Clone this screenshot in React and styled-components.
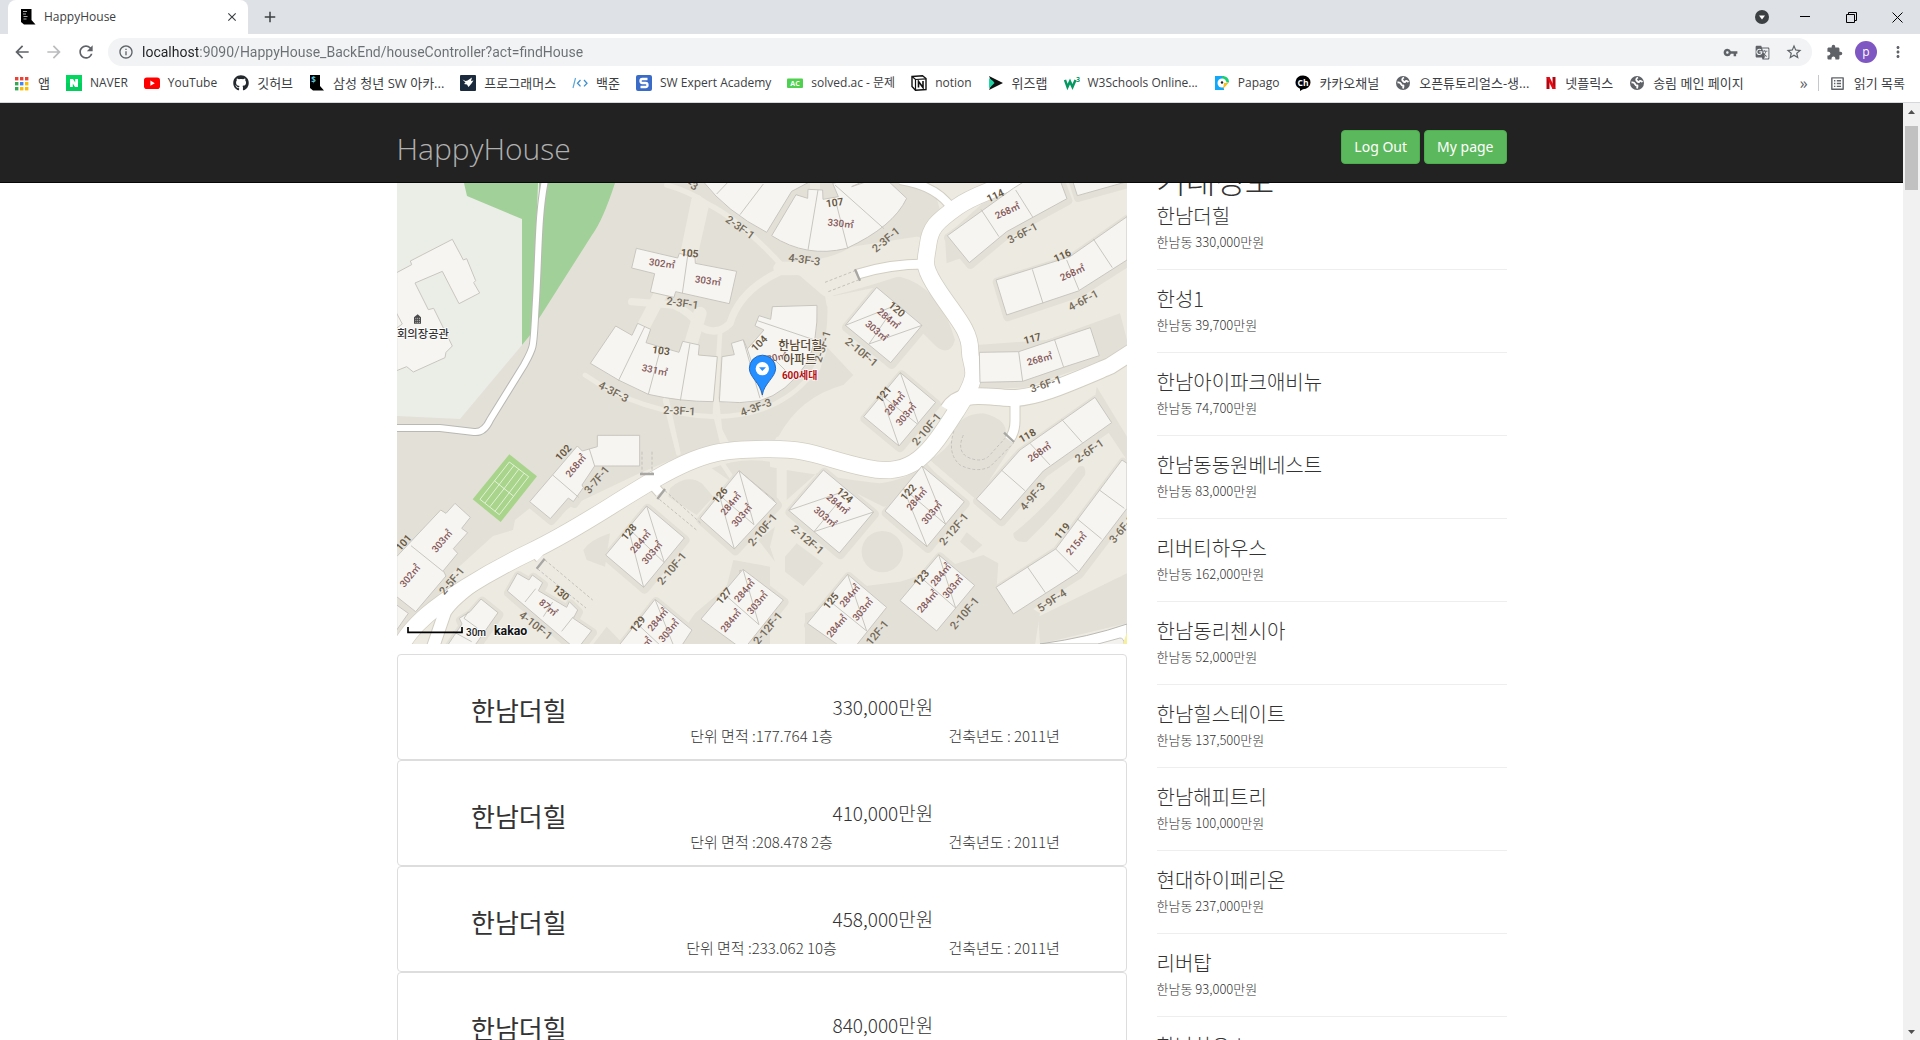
import React from "react";
import styled, { createGlobalStyle, css } from "styled-components";
import {
  MdArrowBack, MdArrowForward, MdRefresh, MdInfoOutline, MdVpnKey, MdGTranslate,
  MdStarOutline, MdExtension, MdMoreVert, MdClose, MdAdd, MdOutlineListAlt,
} from "react-icons/md";
import { FaGithub } from "react-icons/fa";

const latin = `"Open Sans", "Noto Sans CJK KR", sans-serif`;
const korean = `"Noto Sans CJK KR", "Open Sans", sans-serif`;

const GlobalStyle = createGlobalStyle`
  *, *::before, *::after { box-sizing: border-box; }
  body { margin: 0; background: #fff; color: #333; font-family: ${korean}; overflow: hidden; }
  h1, h2, h3, p, ul { margin: 0; padding: 0; font-weight: 400; }
  li { list-style: none; }
  button { font: inherit; padding: 0; border: 0; background: none; color: inherit; }
  a { color: inherit; text-decoration: none; }
  svg { display: block; flex: none; }
`;

const Window = styled.div`
  display: flex;
  flex-direction: column;
  height: 100vh;
`;

/* ---------- browser frame ---------- */

const TabStrip = styled.div`
  display: flex;
  align-items: center;
  height: 34px;
  padding-left: 8px;
  background: #dee1e6;
  color: #3c4043;
`;
const Tab = styled.div`
  display: flex;
  align-items: center;
  gap: 8px;
  width: 240px;
  height: 34px;
  padding: 0 8px 0 12px;
  background: #fff;
  border-radius: 8px 8px 0 0;
  font: 12px/16px ${latin};
`;
const TabTitle = styled.span`flex: 1;`;
const IconButton = styled.button`
  display: grid;
  place-items: center;
  width: ${(p) => p.$w || 32}px;
  height: 28px;
  color: ${(p) => p.$color || "#5f6368"};
`;
const WindowControls = styled.div`
  display: flex;
  align-items: center;
  margin-left: auto;
`;

const Toolbar = styled.div`
  display: flex;
  align-items: center;
  height: 36px;
  padding: 0 6px;
  background: #fff;
`;
const Omnibox = styled.label`
  display: flex;
  align-items: center;
  flex: 1;
  height: 28px;
  margin: 0 6px;
  padding: 0 2px 0 10px;
  gap: 8px;
  border-radius: 14px;
  background: #f1f3f4;
  color: #5f6368;
`;
const Address = styled.input`
  flex: 1;
  min-width: 0;
  padding: 0;
  border: 0;
  outline: 0;
  font: 14px/20px Roboto, ${latin};
  color: transparent;
  background: linear-gradient(90deg, #202124 56px, #6b6f73 56px);
  background-clip: text;
  -webkit-background-clip: text;
`;
const Avatar = styled.span`
  display: grid;
  place-items: center;
  width: 22px;
  height: 22px;
  border-radius: 50%;
  background: #7e57c2;
  color: #fff;
  font: 12px/16px ${latin};
`;

const Bookmarks = styled.nav`
  display: flex;
  align-items: center;
  height: 33px;
  padding: 0 15px 6px 14px;
  gap: 16px;
  border-bottom: 1px solid #d5d7da;
  background: #fff;
  white-space: nowrap;
`;
const Bookmark = styled.a`
  display: flex;
  align-items: center;
  gap: 8px;
  font: ${(p) => (p.$korean ? 13 : 12)}px/20px ${latin};
  color: #3c4043;
`;
const BookmarkEnd = styled.div`
  display: flex;
  align-items: center;
  gap: 10px;
  margin-left: auto;
  font: 16px/20px ${latin};
  color: #5f6368;
`;
const Divider = styled.span`
  width: 1px;
  height: 16px;
  background: #c6c9cc;
`;

/* ---------- page ---------- */

const Viewport = styled.div`
  display: flex;
  flex: 1;
  min-height: 0;
`;
const Page = styled.div`
  flex: 1;
  min-width: 0;
  overflow: hidden;
`;
const container = css`
  width: 100%;
  max-width: 1140px;
  margin: 0 auto;
  padding: 0 15px;
`;
const SiteHeader = styled.header`
  height: 80px;
  background: #222;
  border-bottom: 1px solid #080808;
`;
const HeaderInner = styled.div`
  ${container}
  display: flex;
  align-items: center;
  justify-content: space-between;
  height: 80px;
  padding-top: 8px;
`;
const Brand = styled.a`
  padding-top: 4px;
  font: 300 30px/40px ${latin};
  color: #b0b0b0;
`;
const Actions = styled.div`
  display: flex;
  gap: 4px;
`;
const GreenButton = styled.button`
  height: 34px;
  padding: 0 12px;
  border: 1px solid #4cae4c;
  border-radius: 4px;
  background: #5cb85c;
  color: #fff;
  font: 14px/20px "Noto Sans", ${latin};
`;

const Content = styled.main`
  ${container}
  display: grid;
  grid-template-columns: 73fr 35fr;
  column-gap: 30px;
`;
const MapFrame = styled.figure`
  margin: 0 0 10px;
  svg { width: 100%; height: auto; }
`;
const Card = styled.article`
  display: grid;
  grid-template-columns: repeat(3, 1fr);
  grid-template-rows: 26px 32px;
  align-items: center;
  height: 106px;
  padding-top: 39px;
  border: 1px solid #ddd;
  border-radius: 4px;
  text-align: center;
`;
const CardTitle = styled.h2`
  padding-top: 6px;
  font-size: 26px;
  line-height: 32px;
`;
const CardPrice = styled.p`
  grid-column: 2 / 4;
  font-size: 19px;
  line-height: 24px;
  font-weight: 300;
`;
const CardDetail = styled.p`
  grid-column: ${(p) => p.$col};
  font-size: 15px;
  line-height: 20px;
  font-weight: 300;
`;
const SideTitle = styled.h1`
  display: flex;
  align-items: flex-end;
  height: 16px;
  overflow: hidden;
  font-size: 32px;
  line-height: 40px;
  font-weight: 300;
`;
const Deal = styled.li`
  height: 83px;
  padding-top: 15px;
  border-bottom: 1px solid #eee;
  &:first-child { height: 71px; padding-top: 3px; }
`;
const DealName = styled.h3`
  font-size: 20px;
  line-height: 28px;
  font-weight: 300;
`;
const DealInfo = styled.p`
  font-size: 13px;
  line-height: 24px;
  font-weight: 300;
`;

const Scrollbar = styled.div`
  display: flex;
  flex-direction: column;
  align-items: center;
  width: 17px;
  background: #f1f1f1;
`;
const ScrollArrow = styled.button`
  display: grid;
  place-items: center;
  width: 17px;
  height: 17px;
`;
const Thumb = styled.div`
  width: 13px;
  height: 64px;
  margin: 6px 0 auto;
  background: #c1c1c1;
`;

/* ---------- bookmark icons ---------- */

const Ico = ({ children, w = 16 }) => (
  <svg width={w} height="16" viewBox="0 0 16 16" aria-hidden="true">{children}</svg>
);
const glyph = (size, fill = "#fff") => ({ fontSize: size, fontWeight: 700, fill, textAnchor: "middle", fontFamily: "Open Sans, sans-serif" });

const icons = {
  apps: (
    <Ico>{["#ea4335", "#ea4335", "#ea4335", "#34a853", "#4285f4", "#fbbc04", "#34a853", "#fbbc04", "#fbbc04"].map((c, i) => (
      <rect key={i} x={1 + (i % 3) * 5} y={2 + Math.floor(i / 3) * 5} width="3.4" height="3.4" fill={c} />
    ))}</Ico>
  ),
  naver: <Ico><rect width="16" height="16" fill="#03d75f" /><path d="M0 8h16v8H0z" fill="#04c35c" opacity=".5" /><path d="M4 4h3l2.200 3.600V4H12v8H9L6.800 8.400V12H4z" fill="#fff" /></Ico>,
  youtube: <Ico><rect y="2.500" width="16" height="11.500" rx="2.800" fill="#f00" /><path d="M6.400 5.600v5.200l4.400-2.600z" fill="#fff" /></Ico>,
  github: <FaGithub size={16} color="#24292e" />,
  ssafy: <Ico><path d="M1 0h10v11l4 4.500H4L1 13z" fill="#000" /><text x="4.500" y="8" {...glyph(8, "#56c5dd")}>$</text></Ico>,
  house: <Ico><path d="M1 0h10.500v11l4 4.500H4L1 13z" fill="#000" /><path d="M3 2.500h4M3 5h3M3.500 7.500h4M3.500 10h3" stroke="#aaa" strokeWidth="1" /></Ico>,
  programmers: <Ico><rect width="16" height="16" rx="1" fill="#1b2a3d" /><path d="M2.500 4.500l3 1.500 2-.5L12 2.500 11 6l2.500-.5-2 3L8.500 12 7 9.500 4 9l1.500-1.500z" fill="#fff" /></Ico>,
  baekjoon: <Ico><path d="M3.500 3L1 13" stroke="#5aa7d6" strokeWidth="1.200" /><path d="M8.500 5L5.500 8.200l3 3.200M12 5l3 3.200-3 3.200" fill="none" stroke="#3f8fd0" strokeWidth="1.300" /></Ico>,
  swea: <Ico><rect width="16" height="16" rx="2" fill="#3a6bc7" /><path d="M11.500 4H6.300Q4.500 4 4.500 5.900T6.300 8h3.400q1.800 0 1.800 2t-1.800 2H4.500" fill="none" stroke="#fff" strokeWidth="2.300" /></Ico>,
  solved: <Ico><rect y="3.500" width="16" height="9.500" rx="1" fill="#4fd04f" /><text x="8" y="11" {...glyph(7)}>AC</text></Ico>,
  notion: <Ico><path d="M1 1.500L11.500.8 15 3.500v11L4.500 15.300 1 11.500z" fill="#fff" stroke="#111" strokeWidth="1.400" /><path d="M1 1.500l3.500 3L15 3.800M4.500 4.500v10.800" fill="none" stroke="#111" strokeWidth="1.200" /><path d="M7.500 12.500V6.500l4.500 6V6" fill="none" stroke="#111" strokeWidth="1.600" /></Ico>,
  wizlab: <Ico><path d="M1 1l14 7L1 15l3-7z" fill="#111" /><path d="M1 3l4 3 1.500 2L1 13.500z" fill="#24d3a6" /></Ico>,
  w3: <Ico><path d="M1 5l2.500 7L6 6.500 8.500 12l3-7" fill="none" stroke="#059862" strokeWidth="2.400" /><text x="14" y="6.500" {...glyph(7, "#059862")}>3</text></Ico>,
  papago: <Ico><path d="M1 1h9v14H1z" fill="#12a8fa" /><path d="M8 1a6 6 0 0 1 7 6.500H8z" fill="#1fce74" /><circle cx="8" cy="8" r="4.500" fill="#fff" /><path d="M10 8h4.500L9 14z" fill="#f9bd16" /><circle cx="8" cy="7.500" r="1.200" fill="#222" /></Ico>,
  kakao: <Ico><path d="M8 .5a7.500 6.900 0 1 1 0 13.800L5 16v-2.300A7.500 6.900 0 0 1 8 .5z" fill="#000" /><text x="8" y="10.500" {...glyph(8.5)}>Ch</text></Ico>,
  globe: <Ico><circle cx="8" cy="8" r="7" fill="#5f6368" /><path d="M2.500 7.500Q5 7 6 9t2 1.500 0 3M9 2.500Q6 4 8 6t2.500.5 3 .5" fill="none" stroke="#fff" strokeWidth="1.800" /></Ico>,
  netflix: <Ico w={12}><path d="M2 0h4v16H2z" fill="#b1060f" /><path d="M10 0h4v16h-4z" fill="#b1060f" /><path d="M2 0h4l8 16h-4z" fill="#e50914" /></Ico>,
};

const bookmarks = [
  ["apps", "앱"], ["naver", "NAVER"], ["youtube", "YouTube"], ["github", "깃허브"],
  ["ssafy", "삼성 청년 SW 아카..."], ["programmers", "프로그래머스"], ["baekjoon", "백준"],
  ["swea", "SW Expert Academy"], ["solved", "solved.ac - 문제"], ["notion", "notion"],
  ["wizlab", "위즈랩"], ["w3", "W3Schools Online..."], ["papago", "Papago"],
  ["kakao", "카카오채널"], ["globe", "오픈튜토리얼스-생..."], ["netflix", "넷플릭스"],
  ["globe", "송림 메인 페이지"],
];
const startsKorean = (label) => /^[가-힣]/.test(label);

/* ---------- map ---------- */

/* Survey sheets: drawn at three times map scale, each with its own origin. */
const sheets = {
  a: [390, 100], b: [750, 180], c: [390, 400], d: [750, 400], e: [540, 180],
};
const at = (s) => `translate(${sheets[s][0]} ${sheets[s][1]}) scale(.33333)`;

/* [sheet, outline, inner walls] */
const buildings = [
  ["a", "M20 518L65 494 61 483 187 418 220 480 230 476 257 542 251 548 269 579 207 611 157 514 75 549 115 629 131 625 187 738 168 757 165 773 70 816 50 800 20 812z", ""],
  ["a", "M20 640L37 672 20 684z", ""],
  ["e", "M289 205L413 234 418 220 465 232 466 250 590 274 568 371 407 335 402 352 331 336 344 281 275 264z", "M443 228L427 340"],
  ["e", "M227 438L276 466 293 430 332 448 318 488 417 517 428 484 478 495 475 525 532 530 520 665Q420 665 325 643Q235 605 151 550z", "M314 440L235 603M362 505L325 643M450 490L421 662"],
  ["e", "M546 530L583 524 574 490 610 479 622 507 672 450 645 437 657 407 692 418 697 380 831 376Q835 480 800 550 740 640 660 662 600 672 538 665z", "M610 480L660 655M622 507L668 650M652 422L824 480M690 525L750 585"],
  ["e", "M490 5L810 5 755 34 680 157Q560 95 490 5zM590 -10", "M575 -5L530 42M670 12L600 104"],
  ["e", "M768 44L803 55 804 28 848 30 849 58 895 50 878 10 1020 -20 1100 55Q1060 140 920 205 800 235 695 167z", "M834 30L804 210M890 75L923 205M885 15L1032 146"],
  ["e", "M935 20L990 -5 1010 -5z", ""],
  ["b", "M592 167L790 25 830 0 930 0 951 56 770 155 658 248z", "M693 88L747 170M797 30L848 111"],
  ["b", "M967 0L982 47 1131 5 1131 0z", ""],
  ["b", "M738 300L960 230 1131 110 1131 240 985 333 770 405z", "M847 268L879 370M950 240L987 330M1030 177L1087 263"],
  ["b", "M688 517L806 515 1021 443 1048 527 940 562 818 604 690 607z", "M806 515L818 604M914 480L941 562"],
  ["b", "M380 322L516 436 422 548 286 436z", "M286 436L440 375M516 436L357 492 420 400"],
  ["b", "M451 578L557 667 447 798 341 710z", "M451 578L505 730M394 645L447 798M394 645L502 732"],
  ["d", "M679 297L810 150 1035 -8 1085 68 880 213 752 360z", "M754 210L825 272M840 130L900 195M935 58L997 128"],
  ["d", "M738 562L917 447 1116 180 1131 190 1131 325 985 517 790 642z", "M832 500L886 578M917 447L985 515M982 357L1055 417M1048 270L1123 325"],
  ["d", "M220 210L371 336 268 459 116 331z", "M116 331L280 275M371 336L192 395 262 310"],
  ["d", "M516 198L643 305 531 440 405 333z", "M516 198L587 373M460 265L531 440M460 265L587 373"],
  ["d", "M566 464L674 556 560 693 450 602z", "M566 464L617 624M510 530L617 624"],
  ["d", "M293 523L410 622 300 760 172 670z", "M293 523L350 693M235 600L350 693"],
  ["d", "M-30 215L73 300 12 375 -30 340z", ""],
  ["d", "M-30 510L92 604 10 700 -30 670z", "M-30 640L28 678M-10 560L28 678"],
  ["c", "M562 138L577 153 622 140 622 106 749 106 749 198 614 198 576 255 580 263 550 305 535 294 481 356 419 305z", "M598 147L614 198M488 225L566 292"],
  ["c", "M20 470L152 330 168 340 195 310 241 352 215 385 233 398 190 446 203 460 160 512 168 528 77 635 20 590z", "M63 437L160 515"],
  ["c", "M770 318L883 414 761 562 647 465z", "M770 318L823 488M715 385L761 562M715 385L823 488"],
  ["c", "M1047 212L1160 310 1033 447 930 355z", "M1047 212L1092 374M988 285L1033 447M988 285L1092 374"],
  ["c", "M1059 508L1180 600 1060 750 933 657z", "M1059 508L1107 674M1000 580L1107 674"],
  ["c", "M795 598L906 690 860 760 680 745z", "M795 598L850 735M738 668L815 740"],
  ["c", "M382 520L417 540 427 525 458 548 445 572 530 622 538 605 563 630 550 655 605 692 560 750 352 573z", "M437 566L405 606M488 606L460 650M550 650L515 694"],
  ["c", "M273 597L324 638 245 750 170 740 216 672 208 655 240 635z", "M235 635L222 655 262 684M190 695L245 725"],
  ["c", "M20 615L55 640 20 690z", ""],
];

/* soft ground patches between the blocks */
const grounds = [
  ["e", "M625 350Q650 285 760 280 850 300 862 360V470L830 380 690 375 655 405Q610 390 625 350z"],
  ["e", "M870 350Q1000 290 1080 290 1200 320 1245 480 1230 530 1190 500L1010 322z"],
  ["e", "M860 500L940 585 910 615Q780 650 715 770H540L528 712Q720 700 840 570z"],
  ["b", "M720 50L800 10V100L700 210 590 250 585 170z"],
  ["b", "M680 495L890 480 1110 400 1131 480 1131 510 940 580 690 625z"],
  ["c", "M965 205Q1050 170 1140 185V330L1030 250z"],
  ["c", "M840 265Q890 220 935 250L970 290 920 345 835 290zM580 450Q600 420 660 400L645 500 590 480z"],
  ["d", "M0 185L80 205V330L30 310zM110 210Q300 240 390 250 470 240 530 190L620 290 400 320 200 220 110 300z"],
  ["d", "M540 180Q590 150 605 120 620 40 700 40 780 60 765 110L790 130 680 300z"],
  ["d", "M25 420L75 380 60 440 75 485zM105 470L140 430 220 490 160 558 105 515z"],
  ["d", "M335 455a62 62 0 1 0 124 0a62 62 0 1 0 -124 0zM650 397L697 435 670 460 630 425z"],
  ["d", "M790 400Q880 330 985 200 1010 190 1005 225 930 330 830 425 790 430 790 400z"],
  ["d", "M165 640Q330 600 330 560L450 545 700 465 745 490 740 560 870 640 855 735H165z"],
  ["d", "M865 650L1131 520V670L870 732z"],
  ["d", "M1040 -40L1131 110V180L1030 30z"],
  ["c", "M850 735L915 640 1010 560 1030 480 1140 500V735zM610 732L650 680 700 732z"],
];

/* footpaths: [sheet, path, width] */
const paths = [
  ["e", "M380 15Q450 35 500 70 600 120 720 250", 16],
  ["e", "M470 60L435 230M490 80L455 235", 32],
  ["e", "M275 365L400 375Q450 395 480 440 530 470 570 430 600 330 720 275 860 260 870 370", 22],
  ["e", "M360 345L310 440M480 400L450 500", 40],
  ["e", "M135 585Q300 700 520 710 700 710 800 600 880 520 868 350", 14],
  ["e", "M540 460L525 700 550 800M375 660L410 800", 14],
  ["e", "M720 265Q860 270 940 220L1131 190M790 270L860 330Q950 310 1131 250", 40],
  ["e", "M825 0V30M890 0L920 40", 30],
  ["c", "M830 0L865 160M980 0L990 90 1010 130", 14],
  ["c", "M990 180L1030 240", 14],
];

/* [sheet, x, y, rotation, text] */
const numbers = [
  ["e", 449, 220, 5, "105"], ["e", 363, 512, 8, "103"], ["e", 658, 490, -45, "104"], ["e", 884, 68, -8, "107"],
  ["b", 736, 47, -25, "114"], ["b", 937, 227, -25, "116"], ["b", 847, 476, -15, "117"], ["b", 440, 388, 40, "120"],
  ["b", 401, 643, -50, "121"], ["c", 520, 158, -47, "102"], ["c", 41, 428, -48, "101"], ["c", 717, 396, -50, "128"],
  ["c", 990, 286, -50, "126"], ["c", 1002, 588, -50, "127"], ["c", 743, 673, -50, "129"], ["c", 513, 578, 40, "130"],
  ["d", 284, 286, 40, "124"], ["d", 475, 277, -48, "122"], ["d", 832, 107, -30, "118"], ["d", 937, 393, -50, "119"],
  ["d", 514, 534, -50, "123"], ["d", 243, 603, -50, "125"],
];
const areas = [
  ["e", 366, 250, 8, "302㎡"], ["e", 504, 302, 8, "303㎡"], ["e", 344, 570, 12, "331㎡"], ["e", 702, 533, -12, "330㎡"], ["e", 902, 130, 6, "330㎡"],
  ["b", 772, 92, -25, "268㎡"], ["b", 967, 278, -25, "268㎡"], ["b", 869, 537, -15, "268㎡"],
  ["b", 416, 415, 40, "284㎡"], ["b", 380, 452, 40, "303㎡"], ["b", 434, 671, -50, "284㎡"], ["b", 468, 703, -50, "303㎡"],
  ["c", 557, 197, -50, "268㎡"], ["c", 156, 423, -50, "303㎡"], ["c", 60, 527, -50, "302㎡"],
  ["c", 751, 425, -50, "284㎡"], ["c", 786, 458, -50, "303㎡"], ["c", 1022, 311, -50, "284㎡"], ["c", 1055, 346, -50, "303㎡"],
  ["c", 1063, 572, -50, "284㎡"], ["c", 1102, 608, -50, "303㎡"], ["c", 1022, 662, -50, "284㎡"],
  ["c", 803, 659, -50, "284㎡"], ["c", 836, 692, -50, "303㎡"], ["c", 755, 745, -50, "284㎡"], ["c", 475, 622, 40, "87㎡"],
  ["d", 264, 312, 40, "284㎡"], ["d", 226, 350, 40, "303㎡"], ["d", 500, 297, -50, "284㎡"], ["d", 545, 338, -50, "303㎡"],
  ["d", 868, 156, -35, "268㎡"], ["d", 979, 431, -50, "215㎡"],
  ["d", 572, 524, -50, "284㎡"], ["d", 608, 560, -50, "303㎡"], ["d", 532, 604, -50, "284㎡"],
  ["d", 299, 587, -50, "284㎡"], ["d", 338, 628, -50, "303㎡"], ["d", 260, 678, -50, "284㎡"],
];
const floors = [
  ["e", 458, 16, 30, "-3"], ["e", 600, 143, 35, "2-3F-1"], ["e", 427, 370, 8, "2-3F-1"], ["e", 220, 636, 28, "4-3F-3"], ["e", 418, 693, 3, "2-3F-1"],
  ["e", 648, 683, -20, "4-3F-3"], ["e", 793, 240, 8, "4-3F-3"], ["e", 1038, 180, -40, "2-3F-1"], ["e", 848, 500, -72, "2-3F-1"],
  ["b", 818, 160, -28, "3-6F-1"], ["b", 1000, 362, -28, "4-6F-1"], ["b", 887, 613, -18, "3-6F-1"], ["b", 334, 517, 40, "2-10F-1"],
  ["c", 621, 240, -50, "3-7F-1"], ["c", 186, 543, -50, "2-5F-1"], ["c", 846, 506, -50, "2-10F-1"], ["c", 437, 677, 38, "4-10F-1"],
  ["c", 1118, 390, -50, "2-10F-1"], ["c", 1134, 685, -50, "2-12F-1"],
  ["d", 530, 88, -50, "2-10F-1"], ["d", 1018, 153, -35, "2-6F-1"], ["d", 848, 290, -50, "4-9F-3"], ["d", 1116, 388, -50, "3-6F-1"],
  ["d", 906, 602, -33, "5-9F-4"], ["d", 172, 420, 40, "2-12F-1"], ["d", 612, 388, -50, "2-12F-1"], ["d", 644, 640, -50, "2-10F-1"],
  ["d", 373, 710, -50, "2-12F-1"],
];

const MapText = styled.text`
  font-family: Roboto, "Noto Sans CJK KR", sans-serif;
  font-size: ${(p) => p.$size}px;
  font-weight: ${(p) => p.$weight || 500};
  fill: ${(p) => p.$fill};
  text-anchor: middle;
  dominant-baseline: central;
  paint-order: stroke;
  stroke: ${(p) => p.$halo || "none"};
  stroke-width: 4px;
`;

const Labels = ({ rows, ...style }) => rows.map(([s, x, y, r, t], i) => (
  <g key={i} transform={at(s)}>
    <MapText transform={`translate(${x} ${y}) rotate(${r})`} {...style}>{t}</MapText>
  </g>
));

const mainRoad = "M398 650C406 637 412 628 427 615S480 576 530 552 610 505 657 478 725 449 770 449 820 458 867 468 930 452 957 410 970 370 970 350 955 316 938 290 926 262 928 245 936 222 957 207 1000 190 1028 172";
const sideRoads = [
  ["M948 410C960 390 985 397 1010 398S1070 383 1110 366L1135 350", 17],
  ["M432 650L445 612Q452 600 480 580", 13],
  ["M858 274Q890 264 925 264", 10],
  ["M900 180Q938 186 953 210", 9],
  ["M1015 395V421Q1015 432 1009 440", 10],
  ["M530 548L540 558M650 482L660 493", 10],
];
const campusRoad = "M545 180C538 215 539 250 536 300S535 345 524 365L490 420Q484 433 474 432L440 428H395";

const RealtyMap = () => (
  <svg viewBox="397 183 730 461" role="img" aria-label="한남더힐 지도">
    <rect x="397" y="183" width="730" height="461" fill="#edeae1" />
    <path d="M397 183H905L936 196 940 210 925 238 880 245 830 266 790 272 828 300 830 330 810 375 775 440 720 443 690 452 640 473 577 503 550 520 530 508 515 520 513 530 493 536 450 575 397 610z" fill="#e3e0d8" />
    <path d="M397 183H545L537 320 522 345 460 419 397 416z" fill="#ebede7" />
    <path d="M464 183L467 196 522 219V345L531 334 533 320 538 183zM539 183H615Q603 220 592 235L538 320z" fill="#a1d099" />
    {grounds.map(([s, d], i) => <path key={i} transform={at(s)} d={d} fill="#e3e0d8" />)}
    <g fill="none" stroke="#edeae1" strokeLinecap="round" strokeLinejoin="round">
      {paths.map(([s, d, w], i) => <path key={i} transform={at(s)} d={d} strokeWidth={w} />)}
    </g>
    {buildings.slice(8).map(([s, d], i) => (
      <path key={i} transform={`${at(s)} translate(3 6)`} d={d} fill="#e3e0d8" stroke="#e3e0d8" strokeWidth="26" strokeLinejoin="round" />
    ))}
    <g fill="none" strokeLinecap="butt">
      <path d={campusRoad} stroke="#b9b8b3" strokeWidth="8" />
      <path d={campusRoad} stroke="#fff" strokeWidth="6" />
      <path d={mainRoad} stroke="#d2cec2" strokeWidth="18" />
      {sideRoads.map(([d, w]) => <path key={d} d={d} stroke="#d2cec2" strokeWidth={w + 1} />)}
      <path d={mainRoad} stroke="#fff" strokeWidth="16.500" />
      {sideRoads.map(([d, w]) => <path key={d} d={d} stroke="#fff" strokeWidth={w - 1} />)}
    </g>
    <path d="M1040 644Q1090 637 1127 624V644z" fill="#fff" stroke="#b9b8b3" />
    <path d="M1098 644L1120 638Q1124 638 1124 644" fill="#f4f2ee" stroke="#c5c3bd" />
    <path d="M1127 632L1123 644H1127z" fill="#f6efa0" />
    <g fill="none" stroke="#c3c1bb" strokeWidth="3" strokeDasharray="9 6">
      <path transform={at("b")} d="M225 307L315 272M235 335L325 300" />
      <path transform={at("c")} d="M756 155V220M786 155V220M825 272L935 372M808 298L922 392M465 480L608 600M443 507L588 624" />
      <path transform={at("d")} d="M612 92Q590 160 630 195 680 220 720 200L790 130M640 105Q620 150 650 170 690 190 715 170L765 115" />
    </g>
    <g fill="none" stroke="#a9a7a3" strokeWidth="7">
      <path transform={at("b")} d="M315 268L330 302" />
      <path transform={at("c")} d="M750 222H792M825 267L802 297M464 476L440 506" />
      <path transform={at("d")} d="M762 98L792 126" />
    </g>
    <g transform={at("c")}>
      <path d="M358 163L441 229 332 366 248 298z" fill="#a9d48b" />
      <path d="M358 186L416 230 328 344 270 298zM372 196L285 309M402 220L315 334M314 243L370 288M343 265L300 320M386 208L343 265" fill="none" stroke="#fff" strokeWidth="2" />
    </g>
    {buildings.map(([s, d, w], i) => (
      <g key={i} transform={at(s)} stroke="#c9c6be" strokeWidth="3" fill="none">
        <path d={d} fill="#f6f5f2" />
        {w && <path d={w} />}
      </g>
    ))}
    <Labels rows={floors} $size={33} $fill="#736958" />
    <Labels rows={areas} $size={29} $fill="#845656" />
    <Labels rows={numbers} $size={31} $fill="#66563f" $weight={600} />
    <g transform={at("a")}>
      <path d="M72 671V652L83 643 93 652V671z" fill="#4a4a4a" />
      <path d="M76 655H90M76 661H90M76 667H90" stroke="#fff" strokeWidth="2" strokeDasharray="3 2.500" />
      <MapText x="99" y="701" $size={34} $fill="#333" $halo="#fff">회의장공관</MapText>
    </g>
    <g transform={at("e")}>
      <MapText x="781" y="499" $size={36} $fill="#5b4a35" $halo="#f6f5f2">한남더힐</MapText>
      <MapText x="779" y="541" $size={36} $fill="#5b4a35" $halo="#f6f5f2">아파트</MapText>
      <MapText x="779" y="588" $size={30} $fill="#b50f0f" $halo="#fff" $weight={700}>600세대</MapText>
      <path d="M667 645C662 610 628 592 628 565a39.500 39.500 0 0 1 79 0C707 592 672 610 667 645z" fill="#258fff" stroke="#1259b8" strokeWidth="2.500" />
      <circle cx="667" cy="566" r="20" fill="#fff" />
      <path d="M657 562H678L667 573z" fill="#258fff" />
    </g>
    <g transform={at("c")}>
      <path d="M54 681V697H216V681" fill="none" stroke="#000" strokeWidth="5" />
      <MapText x="258" y="698" $size={30} $fill="#222" $halo="#fff">30m</MapText>
      <MapText x="362" y="692" $size={37} $fill="#111" $halo="#fff" $weight={700}>kakao</MapText>
    </g>
  </svg>
);

/* ---------- data ---------- */

const cards = [
  ["330,000", "177.764 1층"], ["410,000", "208.478 2층"], ["458,000", "233.062 10층"], ["840,000", "243.201 1층"],
];
const deals = [
  ["한남더힐", "330,000"], ["한성1", "39,700"], ["한남아이파크애비뉴", "74,700"], ["한남동동원베네스트", "83,000"],
  ["리버티하우스", "162,000"], ["한남동리첸시아", "52,000"], ["한남힐스테이트", "137,500"], ["한남해피트리", "100,000"],
  ["현대하이페리온", "237,000"], ["리버탑", "93,000"], ["한남하우스", "85,000"],
];

export default function App() {
  return (
    <Window>
      <GlobalStyle />
      <TabStrip>
        <Tab>
          {icons.house}
          <TabTitle>HappyHouse</TabTitle>
          <IconButton $w={16} $color="#3c4043" aria-label="탭 닫기"><MdClose size={14} /></IconButton>
        </Tab>
        <IconButton $w={44} $color="#3c4043" aria-label="새 탭"><MdAdd size={18} /></IconButton>
        <WindowControls>
          <IconButton $w={40} aria-label="탭 검색">
            <svg width="14" height="14" viewBox="0 0 14 14"><circle cx="7" cy="7" r="7" fill="#3c4043" /><path d="M4 5.500h6L7 9.500z" fill="#fff" /></svg>
          </IconButton>
          <IconButton $w={46} aria-label="최소화"><svg width="10" height="10"><path d="M0 4.500h10" stroke="#000" /></svg></IconButton>
          <IconButton $w={46} aria-label="복원"><svg width="11" height="11" fill="none" stroke="#000"><path d="M.5 2.500h8v8h-8zM2.500 2.500v-2h8v8h-2" /></svg></IconButton>
          <IconButton $w={46} aria-label="닫기"><svg width="11" height="11" stroke="#000"><path d="M.5.5l10 10M10.500.5l-10 10" /></svg></IconButton>
        </WindowControls>
      </TabStrip>
      <Toolbar>
        <IconButton aria-label="뒤로"><MdArrowBack size={20} /></IconButton>
        <IconButton $color="#babcbe" aria-label="앞으로"><MdArrowForward size={20} /></IconButton>
        <IconButton aria-label="새로고침"><MdRefresh size={20} /></IconButton>
        <Omnibox>
          <MdInfoOutline size={16} />
          <Address aria-label="주소" defaultValue="localhost:9090/HappyHouse_BackEnd/houseController?act=findHouse" />
          <IconButton aria-label="비밀번호"><MdVpnKey size={15} /></IconButton>
          <IconButton $w={16} aria-label="번역"><MdGTranslate size={15} /></IconButton>
          <IconButton aria-label="북마크"><MdStarOutline size={18} /></IconButton>
        </Omnibox>
        <IconButton aria-label="확장 프로그램"><MdExtension size={17} /></IconButton>
        <IconButton aria-label="프로필"><Avatar>p</Avatar></IconButton>
        <IconButton aria-label="메뉴"><MdMoreVert size={18} /></IconButton>
      </Toolbar>
      <Bookmarks>
        {bookmarks.map(([icon, label]) => (
          <Bookmark key={label} href="#" $korean={startsKorean(label)}>{icons[icon]}{label}</Bookmark>
        ))}
        <BookmarkEnd>
          <span>»</span>
          <Divider />
          <Bookmark href="#" $korean><MdOutlineListAlt size={17} color="#5f6368" />읽기 목록</Bookmark>
        </BookmarkEnd>
      </Bookmarks>
      <Viewport>
        <Page>
          <SiteHeader>
            <HeaderInner>
              <Brand href="#">HappyHouse</Brand>
              <Actions>
                <GreenButton>Log Out</GreenButton>
                <GreenButton>My page</GreenButton>
              </Actions>
            </HeaderInner>
          </SiteHeader>
          <Content>
            <section>
              <MapFrame><RealtyMap /></MapFrame>
              {cards.map(([price, size]) => (
                <Card key={price}>
                  <CardTitle>한남더힐</CardTitle>
                  <CardPrice>{price}만원</CardPrice>
                  <CardDetail $col={2}>단위 면적 :{size}</CardDetail>
                  <CardDetail $col={3}>건축년도 : 2011년</CardDetail>
                </Card>
              ))}
            </section>
            <aside>
              <SideTitle>거래정보</SideTitle>
              <ul>
                {deals.map(([name, price]) => (
                  <Deal key={name}>
                    <DealName>{name}</DealName>
                    <DealInfo>한남동 {price}만원</DealInfo>
                  </Deal>
                ))}
              </ul>
            </aside>
          </Content>
        </Page>
        <Scrollbar>
          <ScrollArrow aria-label="위로"><svg width="7" height="4"><path d="M0 4h7L3.500 0z" fill="#505050" /></svg></ScrollArrow>
          <Thumb />
          <ScrollArrow aria-label="아래로"><svg width="7" height="4"><path d="M0 0h7L3.500 4z" fill="#505050" /></svg></ScrollArrow>
        </Scrollbar>
      </Viewport>
    </Window>
  );
}
